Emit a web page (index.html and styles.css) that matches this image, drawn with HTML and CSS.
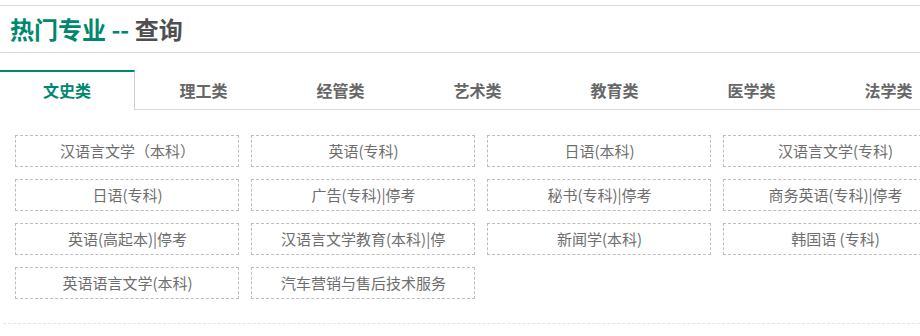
FILE: index.html
```html
<!DOCTYPE html>
<html lang="zh-CN">
<head>
<meta charset="utf-8">
<title>热门专业 -- 查询</title>
<link rel="stylesheet" href="styles.css">
</head>
<body>
<div class="panel">
  <div class="header"><span class="green">热门专业 --</span> <span class="dark">查询</span></div>
  <div class="tabs">
    <div class="tab active">文史类</div>
    <div class="tab">理工类</div>
    <div class="tab">经管类</div>
    <div class="tab">艺术类</div>
    <div class="tab">教育类</div>
    <div class="tab">医学类</div>
    <div class="tab">法学类</div>
  </div>
  <div class="list">
    <div class="item"><span class="label">汉语言文学（本科）</span></div>
    <div class="item"><span class="label">英语(专科)</span></div>
    <div class="item"><span class="label">日语(本科)</span></div>
    <div class="item"><span class="label">汉语言文学(专科)</span></div>
    <div class="item"><span class="label">日语(专科)</span></div>
    <div class="item"><span class="label">广告(专科)|停考</span></div>
    <div class="item"><span class="label">秘书(专科)|停考</span></div>
    <div class="item"><span class="label">商务英语(专科)|停考</span></div>
    <div class="item"><span class="label">英语(高起本)|停考</span></div>
    <div class="item"><span class="label">汉语言文学教育(本科)|停考</span></div>
    <div class="item"><span class="label">新闻学(本科)</span></div>
    <div class="item"><span class="label">韩国语 (专科)</span></div>
    <div class="item"><span class="label">英语语言文学(本科)</span></div>
    <div class="item"><span class="label">汽车营销与售后技术服务</span></div>
  </div>
  <div class="footer"></div>
</div>
</body>
</html>
```

FILE: styles.css
```css
html, body {
  margin: 0;
  padding: 0;
  background: #fff;
  overflow: hidden;
}
body {
  font-family: "Noto Sans CJK SC", "Noto Sans", sans-serif;
  width: 920px;
}
.panel {
  padding-top: 5px;
  overflow: hidden;
}
.header {
  border-top: 1px solid #d9d9d9;
  border-bottom: 1px solid #d9d9d9;
  height: 46px;
  line-height: 46px;
  padding-left: 10px;
  font-size: 24px;
  font-weight: bold;
  white-space: nowrap;
}
.green { color: #00876f; }
.dark { color: #4f4f4f; }
.tabs {
  display: flex;
  margin-top: 17px;
  border-bottom: 1px solid #d6d6d6;
  height: 39px;
  width: 1100px;
}
.tab {
  flex: 0 0 137px;
  box-sizing: border-box;
  height: 39px;
  line-height: 37px;
  border-top: 2px solid transparent;
  text-align: center;
  font-size: 16px;
  font-weight: bold;
  color: #676767;
}
.tab.active {
  flex-basis: 135px;
  height: 40px;
  border-top-color: #00876f;
  border-right: 1px solid #d0d0d0;
  background: #fff;
  color: #00876f;
  position: relative;
  z-index: 1;
}
.list {
  display: grid;
  grid-template-columns: repeat(4, 224px);
  column-gap: 12px;
  row-gap: 12px;
  margin: 25px 0 0 15px;
  width: 940px;
}
.item {
  box-sizing: border-box;
  height: 32px;
  line-height: 30px;
  border: 1px dashed #bdbdbd;
  font-size: 15px;
  color: #6e6e6e;
}
.label {
  display: block;
  margin: 0 28px 0 29px;
  text-align: center;
  white-space: nowrap;
  overflow: hidden;
}
.footer {
  margin: 24px 0 0 3px;
  border-top: 1px dashed #e6e6e6;
}
```
